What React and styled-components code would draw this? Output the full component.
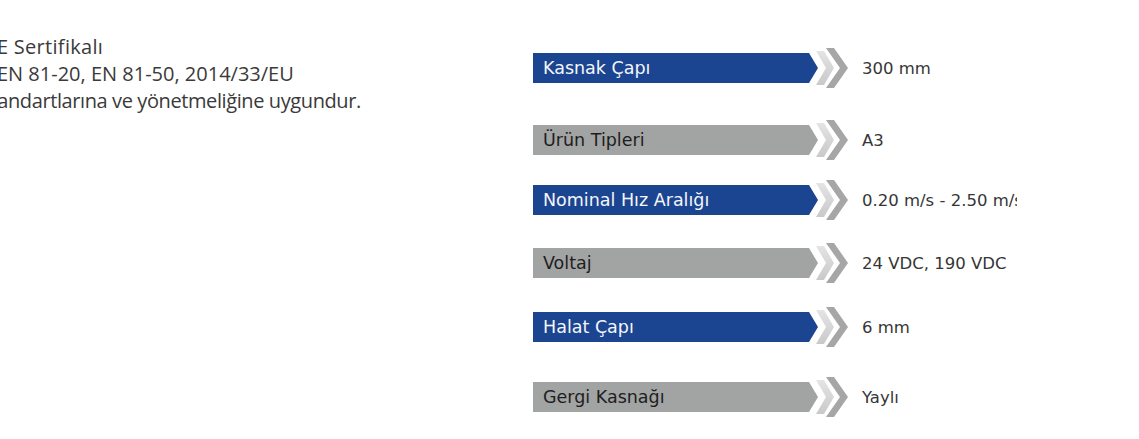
import React from "react";
import styled, { createGlobalStyle } from "styled-components";

const Global = createGlobalStyle`
  html, body { margin: 0; padding: 0; background: #fff; }
  body { overflow: hidden; }
`;

const Page = styled.div`
  display: flex;
  width: 1139px;
  height: 439px;
  overflow: hidden;
`;

const LeftCol = styled.div`
  width: 533px;
  flex: none;
  padding-top: 33px;
  box-sizing: border-box;
`;

const InfoLine = styled.div`
  margin-left: ${(p) => p.$shift}px;
  font-family: "Open Sans", sans-serif;
  font-size: 20px;
  line-height: 27px;
  letter-spacing: ${(p) => p.$track}px;
  color: #3a3a3a;
  white-space: nowrap;
`;

const SpecPanel = styled.div`
  width: 484px;
  flex: none;
  overflow: hidden;
  display: flex;
  flex-direction: column;
`;

const Row = styled.div`
  display: flex;
  align-items: center;
  height: 42px;
  margin-top: ${(p) => p.$gap}px;
`;

const Label = styled.div`
  width: 285px;
  height: 30px;
  flex: none;
  box-sizing: border-box;
  padding-left: 10px;
  display: flex;
  align-items: center;
  background: ${(p) => (p.$blue ? "#1b4591" : "#a2a3a3")};
  color: ${(p) => (p.$blue ? "#f4f6fa" : "#1e1e1e")};
  clip-path: polygon(0 0, calc(100% - 9px) 0, 100% 50%, calc(100% - 9px) 100%, 0 100%);
  font-family: "DejaVu Sans", sans-serif;
  font-size: 17.5px;
  white-space: nowrap;
`;

const Chevrons = styled.svg`
  flex: none;
  margin-left: -6px;
  display: block;
`;

const Value = styled.div`
  margin-left: 14px;
  font-family: "DejaVu Sans", sans-serif;
  font-size: 16.5px;
  color: #363636;
  white-space: nowrap;
`;

const Arrow = () => (
  <Chevrons width="36" height="42" viewBox="0 0 36 42">
    <defs>
      <linearGradient id="lg" x1="0" y1="0" x2="0" y2="1">
        <stop offset="0" stopColor="#e4e4e4" />
        <stop offset="1" stopColor="#c9c9c9" />
      </linearGradient>
    </defs>
    <polygon points="4,4 12,4 22,21 12,38 4,38 14,21" fill="url(#lg)" />
    <polygon points="14,1 22,1 36,21 22,41 14,41 28,21" fill="#a6a6a6" />
  </Chevrons>
);

const info = [
  { text: "CE Sertifikalı", shift: -16, track: 0.3 },
  { text: "EN 81-20, EN 81-50, 2014/33/EU", shift: -3, track: 0 },
  { text: "Standartlarına ve yönetmeliğine uygundur.", shift: -20, track: -0.4 },
];

const specs = [
  { label: "Kasnak Çapı", value: "300 mm", blue: true, gap: 47 },
  { label: "Ürün Tipleri", value: "A3", blue: false, gap: 30 },
  { label: "Nominal Hız Aralığı", value: "0.20 m/s - 2.50 m/s", blue: true, gap: 18 },
  { label: "Voltaj", value: "24 VDC, 190 VDC", blue: false, gap: 21 },
  { label: "Halat Çapı", value: "6 mm", blue: true, gap: 22 },
  { label: "Gergi Kasnağı", value: "Yaylı", blue: false, gap: 28 },
];

export default function App() {
  return (
    <>
      <Global />
      <Page>
        <LeftCol>
          {info.map((l) => (
            <InfoLine key={l.text} $shift={l.shift} $track={l.track}>
              {l.text}
            </InfoLine>
          ))}
        </LeftCol>
        <SpecPanel>
          {specs.map((s) => (
            <Row key={s.label} $gap={s.gap}>
              <Label $blue={s.blue}>{s.label}</Label>
              <Arrow />
              <Value>{s.value}</Value>
            </Row>
          ))}
        </SpecPanel>
      </Page>
    </>
  );
}
